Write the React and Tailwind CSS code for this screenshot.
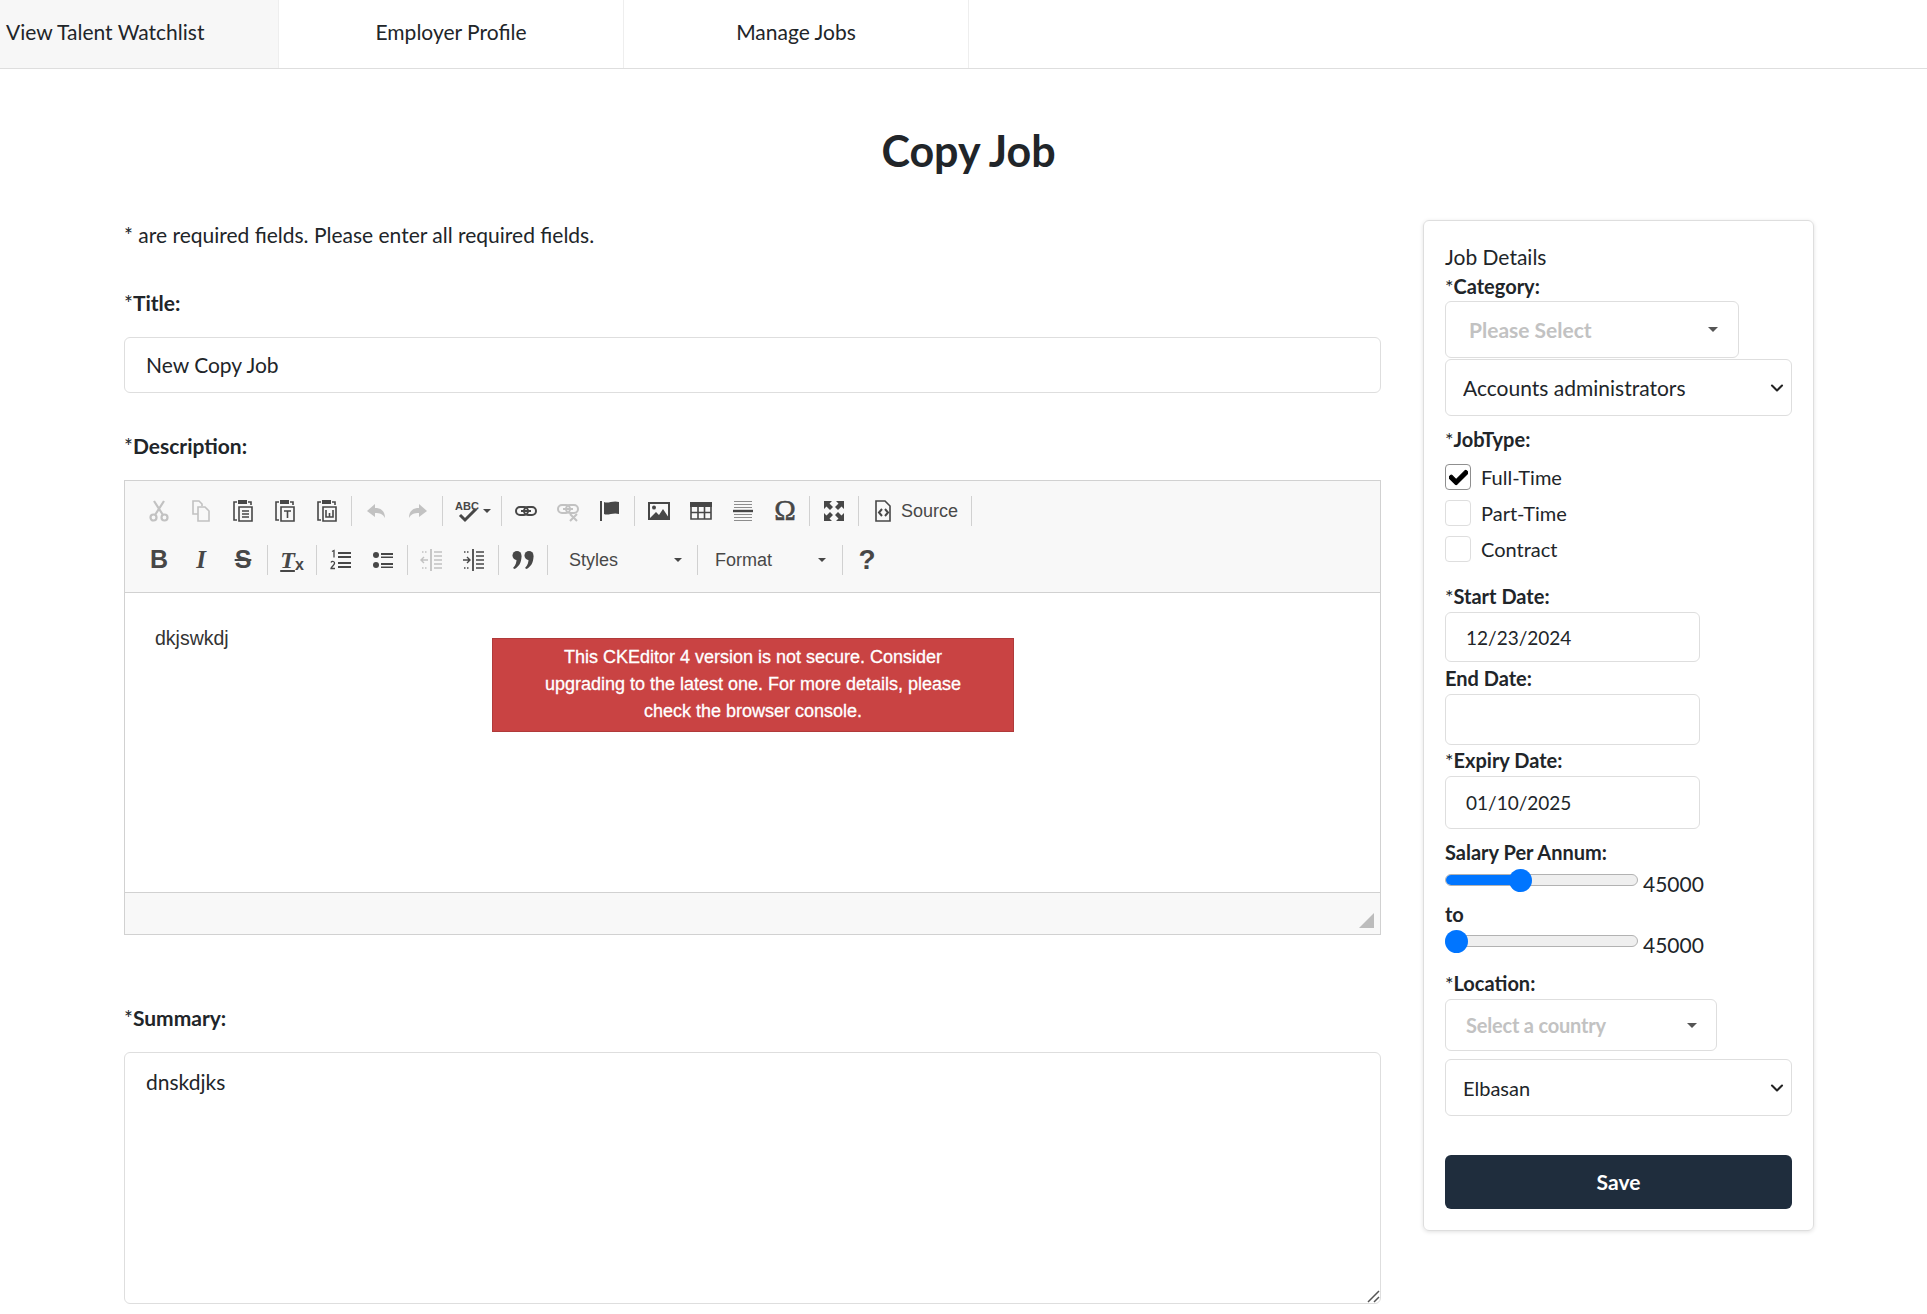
import { ChevronDown } from 'lucide-react';
import { FaCheck } from 'react-icons/fa';

const ICON = '#474747';

// CKEditor toolbar drawings, all on a 24 unit grid
const icons = {
  cut: <g fill="none" stroke={ICON} strokeWidth="2.2"><circle cx="6.5" cy="18.5" r="3" /><circle cx="17.5" cy="18.5" r="3" /><path d="M8 16 17 2M16 16 7 2" /></g>,
  copy: <g fill="none" stroke={ICON} strokeWidth="1.6"><path d="M9 15H4V2h6l3 3v2" /><path d="M9 8h7l4 4v10H9z" /></g>,
  paste: <g fill="none" stroke={ICON} strokeWidth="1.6"><path d="M6 3H3v18h3" /><path d="M17 3h3v3" /><path fill={ICON} stroke="none" d="M7 1h9v4H7z" /><path d="M8 8h13v14H8z" /><path d="M11 12h7M11 15h7M11 18h7" /></g>,
  pasteText: <g fill="none" stroke={ICON} strokeWidth="1.6"><path d="M6 3H3v18h3" /><path d="M17 3h3v3" /><path fill={ICON} stroke="none" d="M7 1h9v4H7z" /><path d="M8 8h13v14H8z" /><path d="M11 12h7M14.5 12v7" /></g>,
  pasteWord: <g fill="none" stroke={ICON} strokeWidth="1.6"><path d="M6 3H3v18h3" /><path d="M17 3h3v3" /><path fill={ICON} stroke="none" d="M7 1h9v4H7z" /><path d="M8 8h13v14H8z" /><path d="M11 11v7h7v-7M14.5 18v-4" /></g>,
  undo: <path fill={ICON} d="M11 5 3 12l8 6v-4c5 0 8 1 10 5 0-7-4-10-10-10z" />,
  redo: <path fill={ICON} d="m13 5 8 7-8 6v-4c-5 0-8 1-10 5 0-7 4-10 10-10z" />,
  link: <g fill="none" stroke={ICON} strokeWidth="2"><rect x="2" y="8" width="12" height="8" rx="4" /><rect x="10" y="8" width="12" height="8" rx="4" /><path d="M7 12h10" /></g>,
  unlink: <g fill="none" stroke={ICON} strokeWidth="2"><rect x="2" y="6" width="12" height="8" rx="4" /><rect x="10" y="6" width="12" height="8" rx="4" /><path d="M7 10h10M14 15l7 7M21 15l-7 7" /></g>,
  flag: <g fill={ICON}><path d="M2 2h2v20H2z" /><path d="M6 3c4 2 9-2 15 0v12c-6-2-11 2-15 0z" /></g>,
  image: <g><path fill="none" stroke={ICON} strokeWidth="2" d="M2 4h20v16H2z" /><circle cx="7" cy="8.5" r="2" fill={ICON} /><path fill={ICON} d="m3 19 6-6 3 3 4-6 6 9z" /></g>,
  table: <g fill="none" stroke={ICON} strokeWidth="1.6"><path fill={ICON} stroke="none" d="M1 3h22v5H1z" /><path d="M2 5h20v15H2zM2 13.5h20M9 7v13M15.500 7v13" /></g>,
  hr: <g stroke={ICON}><path strokeWidth="1" opacity=".6" d="M3 2.500h18M3 5.500h18M3 8.500h18M3 15.500h18M3 18.500h18M3 21.500h18" /><path strokeWidth="2.400" d="M2 12h20" /></g>,
  maximize: <path fill={ICON} d="M2 2h8L7.500 4.500 11 8 8 11 4.500 7.500 2 10zM22 2v8l-2.500-2.500L16 11l-3-3 3.500-3.500L14 2zM2 22v-8l2.500 2.500L8 13l3 3-3.500 3.500L10 22zM22 22h-8l2.500-2.500L13 16l3-3 3.500 3.500L22 14z" />,
  source: <g fill="none" stroke={ICON} strokeWidth="1.600"><path d="M5 2h9l5 5v15H5z" /><path strokeWidth="2" d="m11 10-3 3.500 3 3.500M14 10l3 3.500-3 3.500" /></g>,
  ol: <g fill="none" stroke={ICON}><path strokeWidth="1.300" d="M3 3.500 5 2.500v7M2 14.500c1-2 4-1 3.500 1S2 19 2 20.500h4" /><path strokeWidth="2" d="M9 5h13M9 9h13M9 15h13M9 19h13" /></g>,
  ul: <g fill={ICON}><circle cx="5" cy="7" r="3" /><circle cx="5" cy="17" r="3" /><path d="M10 5h12v2H10zM10 8.500h12v1.500H10zM10 15h12v2H10zM10 18.500h12V20H10z" /></g>,
  outdent: <g fill="none" stroke={ICON} strokeWidth="1.400"><path strokeWidth="1.800" d="M11 1v22" /><path d="M14 4h8M14 8h8M14 12h8M14 16h8M14 20h8M1 12h7M4 9l-3 3 3 3" /><path d="M2 4h6M2 20h6" strokeDasharray="1.500 1.500" /></g>,
  indent: <g fill="none" stroke={ICON} strokeWidth="1.400"><path strokeWidth="1.800" d="M11 1v22" /><path d="M14 4h8M14 8h8M14 12h8M14 16h8M14 20h8M1 12h7M5 9l3 3-3 3" /><path d="M2 4h6M2 20h6" strokeDasharray="1.500 1.500" /></g>,
  quote: <g fill={ICON}><circle cx="6" cy="7.500" r="4.500" /><path d="M10.500 8c0 7-3 11-7 13l-1.500-1c3-3 3.500-6 3.500-9z" /><circle cx="18" cy="7.500" r="4.500" /><path d="M22.500 8c0 7-3 11-7 13l-1.500-1c3-3 3.500-6 3.500-9z" /></g>,
};

function Icon({ name, dim }) {
  return (
    <span className="w-[42px] h-[30px] flex items-center justify-center shrink-0">
      <svg width="24" height="24" viewBox="0 0 24 24" className={dim ? 'opacity-30' : ''}>{icons[name]}</svg>
    </span>
  );
}

function Glyph({ children, className }) {
  return (
    <span className={`w-[42px] h-[30px] flex items-center justify-center shrink-0 text-[#474747] ${className}`}>
      {children}
    </span>
  );
}

function Sep() {
  return <span className="w-px h-[30px] mx-[3px] bg-[#d1d1d1] shrink-0" />;
}

function Caret() {
  return <span className="w-0 h-0 border-x-[4px] border-x-transparent border-t-[4px] border-t-[#474747]" />;
}

function Combo({ label, width, pad, caretRight }) {
  return (
    <span className={`h-[30px] flex items-center justify-between shrink-0 text-[18px] text-[#484848] ${width} ${pad} ${caretRight}`}>
      {label}
      <Caret />
    </span>
  );
}

function Toolbar() {
  return (
    <div className="h-[112px] bg-[#f8f8f8] border-b border-[#d1d1d1] pl-[13px] pt-[15px] flex flex-col gap-[19px] font-['Liberation_Sans',sans-serif]">
      <div className="flex items-center h-[30px]">
        <Icon name="cut" dim />
        <Icon name="copy" dim />
        <Icon name="paste" />
        <Icon name="pasteText" />
        <Icon name="pasteWord" />
        <Sep />
        <Icon name="undo" dim />
        <Icon name="redo" dim />
        <Sep />
        <span className="w-[52px] h-[30px] flex items-center justify-center gap-[3px] shrink-0">
          <svg width="26" height="26" viewBox="0 0 26 26">
            <text x="1" y="12" fontSize="11" fontWeight="700" fontFamily="Liberation Sans" fill={ICON}>ABC</text>
            <path d="m6 17 5 5L22 11" fill="none" stroke={ICON} strokeWidth="3" />
          </svg>
          <Caret />
        </span>
        <Sep />
        <Icon name="link" />
        <Icon name="unlink" dim />
        <Icon name="flag" />
        <Sep />
        <Icon name="image" />
        <Icon name="table" />
        <Icon name="hr" />
        <Glyph className="text-[29px] font-['Liberation_Serif',serif] [-webkit-text-stroke:0.5px_#474747]">Ω</Glyph>
        <Sep />
        <Icon name="maximize" />
        <Sep />
        <span className="w-[106px] h-[30px] flex items-center gap-[6px] pl-[9px] shrink-0 text-[18px] text-[#484848]">
          <svg width="24" height="24" viewBox="0 0 24 24">{icons.source}</svg>
          Source
        </span>
        <Sep />
      </div>
      <div className="flex items-center h-[30px]">
        <Glyph className="text-[25px] font-bold">B</Glyph>
        <Glyph className="text-[25px] font-bold italic font-['Liberation_Serif',serif]">I</Glyph>
        <Glyph className="text-[25px] font-bold line-through">S</Glyph>
        <Sep />
        <Glyph className="font-bold">
          <span className="text-[24px] italic font-['Liberation_Serif',serif] underline">T</span>
          <span className="text-[16px] mt-[10px]">x</span>
        </Glyph>
        <Sep />
        <Icon name="ol" />
        <Icon name="ul" />
        <Sep />
        <Icon name="outdent" dim />
        <Icon name="indent" />
        <Sep />
        <Icon name="quote" />
        <Sep />
        <Combo label="Styles" width="w-[143px]" pad="pl-[18px]" caretRight="pr-[12px]" />
        <Sep />
        <Combo label="Format" width="w-[138px]" pad="pl-[14px]" caretRight="pr-[13px]" />
        <Sep />
        <Glyph className="text-[28px] font-bold">?</Glyph>
      </div>
    </div>
  );
}

function Editor() {
  return (
    <div className="border border-[#d1d1d1] font-['Liberation_Sans',sans-serif]">
      <Toolbar />
      <div className="relative h-[300px] border-b border-[#d1d1d1] pl-[30px] pt-[30px] text-[19.500px] leading-[30px] text-[#333]">
        dkjswkdj
        <div className="absolute left-[367px] top-[45px] w-[522px] h-[94px] bg-[#c94343] border border-[#b03a3a] text-white text-[18px] leading-[27px] text-center font-medium pt-[5px] px-[30px] [-webkit-text-stroke:0.3px_#ffffff]">
          This CKEditor 4 version is not secure. Consider upgrading to the latest one. For more details, please check the browser console.
        </div>
      </div>
      <div className="h-[41px] bg-[#f8f8f8] flex justify-end items-end pr-[6px] pb-[6px]">
        <svg width="15" height="15" viewBox="0 0 15 15"><path d="M15 0v15H0z" fill="#bcbcbc" /></svg>
      </div>
    </div>
  );
}

function FieldLabel({ star, children, className = '' }) {
  return (
    <div className={`leading-[24px] text-[#212529] ${className}`}>
      {star && <span className="font-normal">*</span>}
      <span className="font-bold">{children}</span>
    </div>
  );
}

function Picker({ label, width, pad, height, className = '' }) {
  return (
    <div className={`${width} ${height} ${pad} border border-[#dedede] rounded-[6px] flex items-center justify-between text-[#c2c2c2] font-bold ${className}`}>
      {label}
      <span className="w-0 h-0 border-x-[5px] border-x-transparent border-t-[5px] border-t-[#555]" />
    </div>
  );
}

function Select({ value, height, className = '' }) {
  return (
    <div className={`relative ${className}`}>
      <select
        defaultValue={value}
        className={`w-full ${height} appearance-none border border-[#dedede] rounded-[6px] pl-[17px] bg-white text-[#212529] outline-none`}
      >
        <option>{value}</option>
      </select>
      <ChevronDown size={20} strokeWidth={2.5} className="absolute right-[5px] top-1/2 -translate-y-1/2 text-[#222] pointer-events-none" />
    </div>
  );
}

function DateInput({ value, height, pad = 'pl-[20px]', className = '' }) {
  return (
    <input
      defaultValue={value}
      className={`block w-[255px] ${height} ${pad} border border-[#dedede] rounded-[6px] text-[19px] text-[#212529] outline-none ${className}`}
    />
  );
}

function Check({ label, checked }) {
  return (
    <div className="flex items-center gap-[10px] h-[26px]">
      <span className={`w-[26px] h-[26px] rounded-[4px] border flex items-center justify-center ${checked ? 'border-[#8f8f8f]' : 'border-[#dedede]'}`}>
        {checked && <FaCheck size={19} stroke="currentColor" strokeWidth={30} className="text-black" />}
      </span>
      <span className="text-[#212529]">{label}</span>
    </div>
  );
}

function Slider({ fill, thumb }) {
  return (
    <div className="flex items-start gap-[5px]">
      <div className="relative w-[193px] h-[24px] flex items-center">
        <div className="w-full h-[12px] rounded-full bg-[#efefef] border border-[#b2b2b2] overflow-hidden">
          <div className={`h-full bg-[#0075ff] ${fill}`} />
        </div>
        <span className={`absolute top-[1px] w-[23px] h-[23px] rounded-full bg-[#0075ff] ${thumb}`} />
      </div>
      <span className="mt-[4px] leading-[24px] text-[21px] text-[#212529]">45000</span>
    </div>
  );
}

export default function App() {
  return (
    <div className="h-[1314px] overflow-hidden bg-white font-['Lato',sans-serif] text-[20px] text-[#212529]">
      <nav className="h-[69px] border-b border-[#dedede] flex text-[21px]">
        <a className="w-[279px] bg-[#f7f7f7] border-r border-[#eeeeee] pl-[6px] pb-[5px] flex items-center">View Talent Watchlist</a>
        <a className="w-[345px] border-r border-[#eeeeee] pb-[5px] flex items-center justify-center">Employer Profile</a>
        <a className="w-[345px] border-r border-[#eeeeee] pb-[5px] flex items-center justify-center">Manage Jobs</a>
      </nav>

      <h1 className="h-[151px] pt-[52px] pl-[10px] text-center text-[43px] leading-[60px] font-bold">Copy Job</h1>

      <main className="flex gap-[42px] pl-[124px]">
        <div className="w-[1257px] shrink-0 text-[21px]">
          <p className="pt-px leading-[28px]">* are required fields. Please enter all required fields.</p>

          <FieldLabel star className="mt-[40px] !leading-[28px]">Title:</FieldLabel>
          <input
            defaultValue="New Copy Job"
            className="block mt-[20px] w-full h-[56px] pl-[21px] pb-[2px] border border-[#dedede] rounded-[6px] text-[#212529] outline-none"
          />

          <FieldLabel star className="mt-[38px] !leading-[30px]">Description:</FieldLabel>
          <div className="mt-[19px]">
            <Editor />
          </div>

          <FieldLabel star className="mt-[68px] !leading-[30px]">Summary:</FieldLabel>
          <div className="relative mt-[19px]">
            <textarea
              defaultValue="dnskdjks"
              className="block w-full h-[252px] px-[21px] pt-[14px] leading-[30px] border border-[#dedede] rounded-[6px] text-[#212529] outline-none resize-none"
            />
            <svg width="14" height="14" viewBox="0 0 14 14" className="absolute right-[1px] bottom-[1px]">
              <path d="M2 13 13 2M8 13l5-5" stroke="#555" strokeWidth="1.500" fill="none" />
            </svg>
          </div>
        </div>

        <aside className="w-[391px] shrink-0 h-[1011px] border border-[#dedede] rounded-[6px] shadow-[0_1px_4px_rgba(0,0,0,0.12)] pt-[24px] px-[21px]">
          <div className="leading-[24px] text-[21px]">Job Details</div>
          <FieldLabel star className="mt-[5px]">Category:</FieldLabel>
          <Picker label="Please Select" width="w-[294px]" height="h-[57px]" pad="pl-[23px] pr-[20px]" className="mt-[3px] text-[21px]" />
          <Select value="Accounts administrators" height="h-[57px]" className="mt-px text-[21px]" />

          <FieldLabel star className="mt-[11px]">JobType:</FieldLabel>
          <div className="mt-[13px] flex flex-col gap-[10px]">
            <Check label="Full-Time" checked />
            <Check label="Part-Time" />
            <Check label="Contract" />
          </div>

          <FieldLabel star className="mt-[22px]">Start Date:</FieldLabel>
          <DateInput value="12/23/2024" height="h-[50px]" className="mt-[4px]" />
          <FieldLabel className="mt-[4px]">End Date:</FieldLabel>
          <DateInput value="" height="h-[51px]" className="mt-[4px]" />
          <FieldLabel star className="mt-[3px]">Expiry Date:</FieldLabel>
          <DateInput value="01/10/2025" height="h-[53px]" className="mt-[4px]" />

          <FieldLabel className="mt-[11px]">Salary Per Annum:</FieldLabel>
          <div className="mt-[4px]">
            <Slider fill="w-[75px]" thumb="left-[64px]" />
          </div>
          <FieldLabel className="mt-[6px]">to</FieldLabel>
          <div className="mt-[3px]">
            <Slider fill="w-0" thumb="left-0" />
          </div>

          <FieldLabel star className="mt-[14px]">Location:</FieldLabel>
          <Picker label="Select a country" width="w-[272px]" height="h-[52px]" pad="pl-[20px] pr-[19px]" className="mt-[4px] tracking-[-0.200px]" />
          <Select value="Elbasan" height="h-[57px]" className="mt-[8px]" />

          <button className="block mt-[39px] w-full h-[54px] rounded-[6px] bg-[#1f2d3d] text-white text-[21px] font-bold">Save</button>
        </aside>
      </main>
    </div>
  );
}
